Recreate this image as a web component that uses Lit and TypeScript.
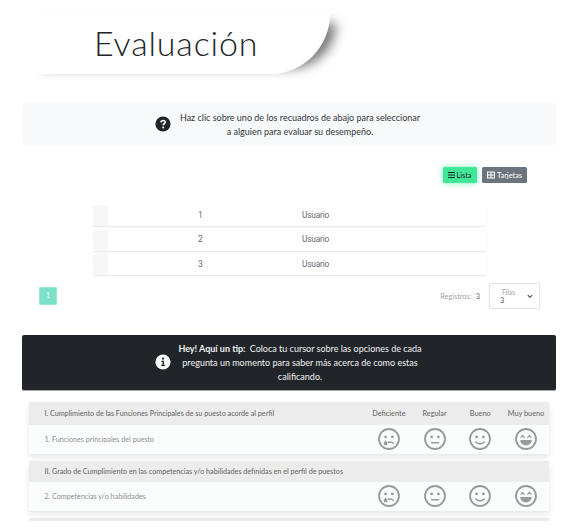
import { LitElement, html, css, svg } from "lit";
import { customElement, property } from "lit/decorators.js";

type Mood = "sad" | "neutral" | "smile" | "laugh";

@customElement("mood-face")
class MoodFace extends LitElement {
  @property() mood: Mood = "smile";

  static styles = css`
    :host { display: block; width: 22px; height: 22px; }
    svg { display: block; fill: none; stroke: #999b9a; stroke-linecap: round; }
    .solid { fill: #999b9a; stroke: none; }
  `;

  private features() {
    const eyes = svg`<circle class="solid" cx="7.6" cy="8.9" r="1.4" /><circle class="solid" cx="14.4" cy="8.9" r="1.4" />`;
    switch (this.mood) {
      case "sad":
        return svg`${eyes}<path d="M10.4 14.3c1.7-.6 3.6-.2 4.7 1" stroke-width="1.6" />
          <path class="solid" d="M7.6 12.2c.9 1.3 1.9 2.5 1.9 3.4a1.9 1.9 0 0 1-3.8 0c0-.9 1-2.1 1.9-3.4z" />`;
      case "neutral":
        return svg`${eyes}<path d="M7.7 14.8h6.8" stroke-width="1.5" />`;
      case "smile":
        return svg`${eyes}<path d="M6.8 14c2.2 2.5 6.2 2.5 8.4 0" stroke-width="1.6" />`;
      default:
        return svg`<path d="M5.9 9.3l1.7-1.9 1.7 1.9M12.7 9.3l1.7-1.9 1.7 1.9" stroke-width="1.1" />
          <path class="solid" d="M5.6 12.1h10.8c.3 0 .5.2.4.5-.4 2.7-2.9 4.800-5.8 4.800s-5.4-2.100-5.8-4.800c-.1-.3.1-.5.4-.5z" />`;
    }
  }

  render() {
    return html`<svg width="22" height="22" viewBox="0 0 22 22">
      <circle cx="11" cy="11" r="10" stroke-width="1.8" />${this.features()}
    </svg>`;
  }
}

@customElement("app-root")
class AppRoot extends LitElement {
  static styles = css`
    :host { display: block; height: 532px; overflow: hidden; background: #fff; font-family: Lato, sans-serif; color: #212529; }
    * { box-sizing: border-box; }
    .page { display: flow-root; height: 521px; overflow: hidden; }
    .title { width: 310px; height: 61px; margin: 13px 0 0 20px; padding: 0 0 0 74px; border-bottom-right-radius: 60px; background: #fff; box-shadow: 14px 2px 12px -8px rgba(0, 0, 0, .55); }
    h1 { margin: 0; font-size: 34px; line-height: 60px; font-weight: 300; letter-spacing: .85px; white-space: nowrap; }
    .banner { display: flex; align-items: center; width: 534px; margin-left: 22px; padding-left: 133px; border-radius: 2px; font-size: 9px; line-height: 13.8px; }
    .banner svg { display: block; flex: none; width: 16px; height: 16px; margin-top: -2px; }
    .banner p { width: 258px; margin: 0; text-align: center; white-space: nowrap; }
    .help { height: 42px; margin-top: 29px; padding-top: 1px; background: #f8f9fb; color: #33373b; }
    .tip { height: 56px; margin-top: 26px; padding-top: 1px; background: #212529; color: #f0f1f2; border-bottom: 1px solid #a5a7a9; }
    .tip b { margin-right: 2px; }
    .views { display: flex; justify-content: flex-end; gap: 5px; margin: 22px 43px 0 0; }
    .view { display: flex; align-items: center; justify-content: center; gap: 1px; width: 34px; height: 16px; border: 0; padding: 0; border-radius: 1.5px; font: 7.4px Lato, sans-serif; background: #3fe797; color: #212529; box-shadow: 0 0 6px #7df0b9; }
    .view.cards { width: 45px; background: #6c757d; color: #fff; box-shadow: none; gap: 2px; }
    .users { display: grid; gap: 3.5px; width: 393px; margin: 22px 0 0 93px; font: 8.5px Roboto, sans-serif; color: #66676d; }
    .user { display: grid; grid-template-columns: 15px 185px 1fr; align-items: center; height: 21px; border-radius: 2px; box-shadow: 0 1px 1.5px rgba(0, 0, 0, .1); }
    .user i { height: 21px; background: #f7f7f7; }
    .user span { text-align: center; padding-bottom: 2px; }
    .user span + span { text-align: left; padding-left: 9px; font-size: 8.3px; letter-spacing: -.17px; }
    .pager { display: flex; align-items: center; height: 26px; margin: 8px 30px 0 39px; font-size: 7.3px; color: #a0a2a4; }
    .current { width: 18px; height: 18px; border: 1px solid #9ae8d5; border-radius: 1px; background: #7ce0c8; color: #e6fff8; text-align: center; line-height: 16px; }
    .count { margin-left: auto; }
    .count b { margin-left: 2.5px; color: #888; }
    .select { display: flex; align-items: center; justify-content: space-between; width: 51px; height: 26px; margin-left: 9px; padding: 0 6px 0 10px; border: 1px solid #e2e3e4; border-radius: 1px; line-height: 9px; }
    .select div div { color: #555; }
    .select small { display: block; padding-left: 2px; font-size: 6.6px; line-height: 8px; }
    .card { width: 520px; margin: 0 0 7px 29px; box-shadow: 0 3px 6px rgba(0, 0, 0, .1); color: #8d8f8e; font-size: 7.18px; }
    .card:first-of-type { margin-top: 11px; }
    .line { display: grid; grid-template-columns: 1fr repeat(4, 45.7px); align-items: center; justify-items: center; height: 29px; padding-right: .2px; background: #fbfdfc; white-space: nowrap; }
    .line > :first-child { justify-self: start; padding-left: 15.4px; }
    .line mood-face { margin-top: -2px; }
    .line.head { height: 21px; background: #ececec; color: #6c6c6c; font-weight: 500; }
    .line.first { height: 23px; }
    .line.first span + span { font-size: 7.3px; }
  `;

  private labels = ["Deficiente", "Regular", "Bueno", "Muy bueno"];
  private moods: Mood[] = ["sad", "neutral", "smile", "laugh"];
  private sections = [
    { title: "I. Cumplimiento de las Funciones Principales de su puesto acorde al perfil", item: "1. Funciones principales del puesto" },
    { title: "II. Grado de Cumplimiento en las competencias y/o habilidades definidas en el perfil de puestos", item: "2. Competencias y/o habilidades" },
    { title: "", item: "" },
  ];

  render() {
    return html`<main class="page">
      <header class="title"><h1>Evaluación</h1></header>
      <section class="banner help">
        <svg viewBox="0 0 16 16"><circle cx="8" cy="8" r="7.6" fill="#212529" /><path d="M5.9 6.3C6.2 3.8 10.3 3.9 10.2 6.3c0 1.5-2 1.4-2 2.9" fill="none" stroke="#fff" stroke-width="1.6" /><circle cx="8.2" cy="11.6" r="1" fill="#fff" /></svg>
        <p>Haz clic sobre uno de los recuadros de abajo para seleccionar<br />a alguien para evaluar su desempeño.</p>
      </section>
      <nav class="views">
        <button class="view"><svg width="7" height="8" viewBox="0 0 7 8"><path d="M0 1.5h7M0 4h7M0 6.5h7" stroke="#212529" /></svg>Lista</button>
        <button class="view cards"><svg width="8" height="8" viewBox="0 0 8 8"><path d="M.6 1h6.8v6H.6zM4 1v6M.6 4h6.8" fill="none" stroke="#fff" stroke-width="1.1" /></svg>Tarjetas</button>
      </nav>
      <section class="users">
        ${[1, 2, 3].map((n) => html`<div class="user"><i></i><span>${n}</span><span>Usuario</span></div>`)}
      </section>
      <footer class="pager">
        <span class="current">1</span>
        <span class="count">Registros: <b>3</b></span>
        <div class="select"><div><small>Filas</small><div>3</div></div>
          <svg width="6" height="5" viewBox="0 0 6 5"><path d="M.8 1.2L3 3.4l2.2-2.2" fill="none" stroke="#555" stroke-width="1.2" /></svg></div>
      </footer>
      <section class="banner tip">
        <svg viewBox="0 0 16 16"><circle cx="8" cy="8" r="7.6" fill="#f8f9fa" /><circle cx="8" cy="4.7" r="1.1" fill="#212529" /><path d="M6.4 7.4h1.8v3.8M6.2 11.4h3.7" fill="none" stroke="#212529" stroke-width="1.4" /></svg>
        <p><b>Hey! Aquí un tip:</b> Coloca tu cursor sobre las opciones de cada<br />pregunta un momento para saber más acerca de como estas<br />calificando.</p>
      </section>
      ${this.sections.map((s, i) => html`<div class="card">
        <div class="line head ${i === 0 ? "first" : ""}"><span>${s.title}</span>${i === 0 ? this.labels.map((l) => html`<span>${l}</span>`) : ""}</div>
        <div class="line"><span>${s.item}</span>${this.moods.map((m) => html`<mood-face .mood=${m}></mood-face>`)}</div>
      </div>`)}
    </main>`;
  }
}
